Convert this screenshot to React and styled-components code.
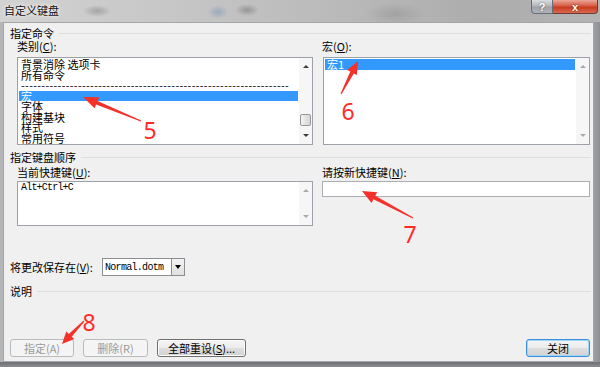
import React from 'react'
import styled, { createGlobalStyle } from 'styled-components'

const GlobalStyle = createGlobalStyle`
  html, body { margin: 0; padding: 0; }
  body {
    background: #a4a7aa;
    font-family: "Noto Sans CJK SC", "Liberation Sans", sans-serif;
  }
`

const Frame = styled.div`
  position: relative;
  width: 600px;
  height: 367px;
  overflow: hidden;
  display: flex;
  flex-direction: column;
  background:
    linear-gradient(to bottom, transparent 0%, transparent 98.6%, #6e7073 98.7%, #8a8c8f 100%),
    linear-gradient(to right, #b4b6b8 0%, #b9bbbd 50%, #9c9ea1 99%, #8d8f92 100%);
`

const TitleBar = styled.div`
  height: 22px;
  flex-shrink: 0;
  display: flex;
  align-items: flex-start;
  padding-left: 4px;
  background:
    radial-gradient(ellipse 14px 6px at 97px 11px, rgba(90, 90, 90, 0.35), transparent),
    radial-gradient(ellipse 10px 7px at 218px 12px, rgba(60, 110, 170, 0.3), transparent),
    radial-gradient(ellipse 12px 6px at 247px 10px, rgba(70, 70, 70, 0.35), transparent),
    radial-gradient(ellipse 30px 11px at 395px 14px, rgba(120, 120, 120, 0.3), transparent),
    linear-gradient(to right, #d2d2d2 0%, #c6c6c6 30%, #bababa 55%, #adadad 80%, #b3b3b3 100%);
`

const Title = styled.div`
  font-size: 11px;
  line-height: 20px;
  color: #111;
  text-shadow: 0 0 5px rgba(255, 255, 255, 0.95), 0 0 2px rgba(255, 255, 255, 0.9);
`

const CaptionButtons = styled.div`
  margin-left: auto;
  margin-right: 2px;
  display: flex;
`

const CaptionButton = styled.div`
  height: 14px;
  width: ${p => p.$w}px;
  box-sizing: border-box;
  display: flex;
  align-items: center;
  justify-content: center;
  color: #fff;
  font-family: "Liberation Sans", sans-serif;
  font-weight: bold;
  font-size: 11px;
  text-shadow: 0 0 2px rgba(0, 0, 0, 0.6);
  border: 1px solid ${p => (p.$close ? '#6f3a33' : '#686d73')};
  border-top: none;
  border-left: ${p => (p.$close ? 'none' : '')};
  border-radius: ${p => (p.$close ? '0 0 4px 0' : '0 0 0 4px')};
  background: ${p =>
    p.$close
      ? 'linear-gradient(#eaa698 0%, #d75c45 45%, #c73b20 55%, #d9694c 100%)'
      : 'linear-gradient(#dadde0 0%, #b4b8bd 45%, #9ea2a8 55%, #b1b5ba 100%)'};
`

const Client = styled.div`
  height: 340px;
  margin: 0 6px 0 3px;
  box-sizing: border-box;
  border: 1px solid #a2a6aa;
  background: #f0f0f0;
  display: flex;
  flex-direction: column;
  padding: 4px 2px 4px 6px;
  font-size: 11px;
  color: #000;
`

const GroupHeader = styled.div`
  height: 13px;
  line-height: 13px;
  display: flex;
  align-items: center;
  margin-top: ${p => p.$mt || 0}px;
  white-space: nowrap;
  &::after {
    content: "";
    flex: 1;
    height: 1px;
    margin-left: 5px;
    background: #dadfe3;
  }
`

const Columns = styled.div`
  display: grid;
  grid-template-columns: 296px 268px;
  column-gap: 9px;
  margin-left: 7px;
`

const Column = styled.div`
  display: flex;
  flex-direction: column;
`

const FieldLabel = styled.div`
  height: 13px;
  line-height: 13px;
  margin-top: ${p => p.$mt || 0}px;
  margin-bottom: ${p => p.$mb || 0}px;
  white-space: nowrap;
`

const Key = styled.span`
  text-decoration: underline;
`

const ListBox = styled.div`
  height: ${p => p.$h}px;
  box-sizing: border-box;
  border: 1px solid #9ca1a8;
  background: #fff;
  display: flex;
  margin-left: ${p => p.$ml || 0}px;
`

const Items = styled.div`
  flex: 1;
  padding: 1px 1px 0;
`

const Item = styled.div`
  height: 10.5px;
  line-height: 10.5px;
  padding-left: 2px;
  white-space: nowrap;
  background: ${p => (p.$selected ? '#3399ff' : 'transparent')};
  color: ${p => (p.$selected ? '#fff' : '#000')};
  font-family: ${p =>
    p.$mono ? '"Liberation Mono", monospace' : '"Noto Sans CJK SC", sans-serif'};
  font-size: ${p => (p.$mono ? '10px' : '11px')};
  letter-spacing: ${p => (p.$mono ? '-0.8px' : '0')};
`

const Dashes = styled.div`
  white-space: nowrap;
  font-family: "Liberation Sans", sans-serif;
  font-size: 11px;
  letter-spacing: 0.4px;
  color: #222;
`

const ScrollBar = styled.div`
  width: 13px;
  display: flex;
  flex-direction: column;
  background: #f6f6f6;
`

const ScrollArrow = styled.div`
  height: 17px;
  display: flex;
  align-items: center;
  justify-content: center;
  &::before {
    content: "";
    border-left: 3px solid transparent;
    border-right: 3px solid transparent;
    ${p => (p.$down ? 'border-top' : 'border-bottom')}: 3px solid ${p =>
      p.$disabled ? '#a9a9a9' : '#3c3c3c'};
  }
`

const ScrollTrack = styled.div`
  flex: 1;
  display: flex;
  flex-direction: column;
  justify-content: flex-end;
  padding: 0 1px 1px;
`

const Thumb = styled.div`
  height: 12px;
  box-sizing: border-box;
  border: 1px solid #979797;
  border-radius: 2px;
  background: linear-gradient(to right, #f4f4f4, #e3e3e3 50%, #d6d6d6);
`

const TextInput = styled.div`
  height: 16px;
  box-sizing: border-box;
  border: 1px solid #abadb3;
  background: #fff;
`

const SaveRow = styled.div`
  display: flex;
  align-items: center;
  height: 18px;
  margin-top: 32px;
`

const SaveLabel = styled.div`
  width: 92px;
  white-space: nowrap;
`

const Combo = styled.div`
  width: 83px;
  height: 18px;
  box-sizing: border-box;
  border: 1px solid #8a8d91;
  background: #fff;
  display: flex;
  align-items: center;
`

const ComboText = styled.div`
  flex: 1;
  padding-left: 2px;
  font-family: "Liberation Mono", monospace;
  font-size: 10px;
  letter-spacing: -0.7px;
`

const ComboButton = styled.div`
  width: 13px;
  height: 16px;
  box-sizing: border-box;
  border-left: 1px solid #8a8d91;
  background: linear-gradient(#f3f3f3, #e0e0e0);
  display: flex;
  align-items: center;
  justify-content: center;
  &::before {
    content: "";
    border-left: 3.5px solid transparent;
    border-right: 3.5px solid transparent;
    border-top: 4px solid #000;
  }
`

const ButtonRow = styled.div`
  margin-top: auto;
  display: flex;
  gap: 9px;
  height: 18px;
`

const Button = styled.div`
  width: ${p => p.$w}px;
  height: 18px;
  box-sizing: border-box;
  border-radius: 3px;
  display: flex;
  align-items: center;
  justify-content: center;
  white-space: nowrap;
  font-size: 11px;
  margin-left: ${p => (p.$right ? 'auto' : '0')};
  margin-right: ${p => (p.$right ? '1px' : '0')};
  color: ${p => (p.$disabled ? '#9a9a9a' : '#000')};
  border: 1px solid ${p =>
    p.$disabled ? '#b8bcbf' : p.$default ? '#3a8fd8' : '#707070'};
  background: ${p =>
    p.$disabled
      ? '#f4f4f4'
      : 'linear-gradient(#f4f4f4 0%, #ececec 50%, #dedede 51%, #d2d2d2 100%)'};
  box-shadow: ${p =>
    p.$disabled ? 'none' : p.$default ? 'inset 0 0 0 1px #9fd8f6' : 'inset 0 0 0 1px #fbfbfb'};
`

const Marks = styled.svg`
  position: absolute;
  left: 0;
  top: 0;
  pointer-events: none;
`

const Num = styled.span`
  position: absolute;
  left: ${p => p.$x}px;
  top: ${p => p.$y}px;
  transform: translate(-50%, -50%);
  color: #ff2b2b;
  font-family: "Noto Sans", "Liberation Sans", sans-serif;
  font-size: 23px;
  line-height: 1;
  pointer-events: none;
`

// tapered arrow from tail to tip
function arrowPoints(tip, tail, headLen, headHalf) {
  const dx = tip[0] - tail[0]
  const dy = tip[1] - tail[1]
  const len = Math.hypot(dx, dy)
  const ux = dx / len
  const uy = dy / len
  const nx = -uy
  const ny = ux
  const bx = tip[0] - ux * headLen
  const by = tip[1] - uy * headLen
  const w0 = 0.6
  const w1 = 2
  const pts = [
    [tail[0] + nx * w0, tail[1] + ny * w0],
    [bx + nx * w1, by + ny * w1],
    [bx + nx * headHalf, by + ny * headHalf],
    tip,
    [bx - nx * headHalf, by - ny * headHalf],
    [bx - nx * w1, by - ny * w1],
    [tail[0] - nx * w0, tail[1] - ny * w0],
  ]
  return pts.map(p => p[0].toFixed(1) + ',' + p[1].toFixed(1)).join(' ')
}

const arrows = [
  { tip: [83, 97], tail: [141, 121], head: 15, half: 6 },
  { tip: [358, 61], tail: [341, 94], head: 13, half: 5.5 },
  { tip: [362, 191], tail: [413, 218], head: 14, half: 6 },
  { tip: [62, 344], tail: [84, 321], head: 12, half: 5.5 },
]

const numbers = [
  { n: '5', x: 150, y: 130 },
  { n: '6', x: 348, y: 111 },
  { n: '7', x: 410, y: 234 },
  { n: '8', x: 89, y: 322 },
]

const categories = [
  { t: '背景消除 选项卡' },
  { t: '所有命令' },
  { dash: true },
  { t: '宏', sel: true },
  { t: '字体' },
  { t: '构建基块' },
  { t: '样式' },
  { t: '常用符号' },
]

function VScroll({ thumb, disabled }) {
  return (
    <ScrollBar>
      <ScrollArrow $disabled={disabled} />
      <ScrollTrack>{thumb && <Thumb />}</ScrollTrack>
      <ScrollArrow $down $disabled={disabled} />
    </ScrollBar>
  )
}

export default function App() {
  return (
    <>
      <GlobalStyle />
      <Frame>
        <TitleBar>
          <Title>自定义键盘</Title>
          <CaptionButtons>
            <CaptionButton $w={22}>?</CaptionButton>
            <CaptionButton $w={45} $close>x</CaptionButton>
          </CaptionButtons>
        </TitleBar>

        <Client>
          <GroupHeader>指定命令</GroupHeader>
          <Columns>
            <Column>
              <FieldLabel $mb={4}>类别(<Key>C</Key>):</FieldLabel>
              <ListBox $h={88}>
                <Items>
                  {categories.map((c, i) =>
                    c.dash ? (
                      <Item key={i}>
                        <Dashes>{'-'.repeat(66)}</Dashes>
                      </Item>
                    ) : (
                      <Item key={i} $selected={c.sel}>{c.t}</Item>
                    )
                  )}
                </Items>
                <VScroll thumb />
              </ListBox>
            </Column>
            <Column>
              <FieldLabel $mb={4}>宏(<Key>O</Key>):</FieldLabel>
              <ListBox $h={88} $ml={1}>
                <Items>
                  <Item $selected>宏1</Item>
                </Items>
                <VScroll disabled />
              </ListBox>
            </Column>
          </Columns>

          <GroupHeader $mt={6}>指定键盘顺序</GroupHeader>
          <Columns>
            <Column>
              <FieldLabel $mt={2} $mb={2}>当前快捷键(<Key>U</Key>):</FieldLabel>
              <ListBox $h={45}>
                <Items>
                  <Item $mono>Alt+Ctrl+C</Item>
                </Items>
                <VScroll disabled />
              </ListBox>
            </Column>
            <Column>
              <FieldLabel $mt={2} $mb={2}>请按新快捷键(<Key>N</Key>):</FieldLabel>
              <TextInput />
            </Column>
          </Columns>

          <SaveRow>
            <SaveLabel>将更改保存在(<Key>V</Key>):</SaveLabel>
            <Combo>
              <ComboText>Normal.dotm</ComboText>
              <ComboButton />
            </Combo>
          </SaveRow>

          <GroupHeader $mt={9}>说明</GroupHeader>

          <ButtonRow>
            <Button $w={64} $disabled>指定(A)</Button>
            <Button $w={65} $disabled>删除(R)</Button>
            <Button $w={89}>全部重设(<Key>S</Key>)...</Button>
            <Button $w={64} $right $default>关闭</Button>
          </ButtonRow>
        </Client>

        <Marks width="600" height="367" viewBox="0 0 600 367">
          {arrows.map((a, i) => (
            <polygon key={i} points={arrowPoints(a.tip, a.tail, a.head, a.half)} fill="#f4312a" />
          ))}
        </Marks>
        {numbers.map(m => (
          <Num key={m.n} $x={m.x} $y={m.y}>{m.n}</Num>
        ))}
      </Frame>
    </>
  )
}
